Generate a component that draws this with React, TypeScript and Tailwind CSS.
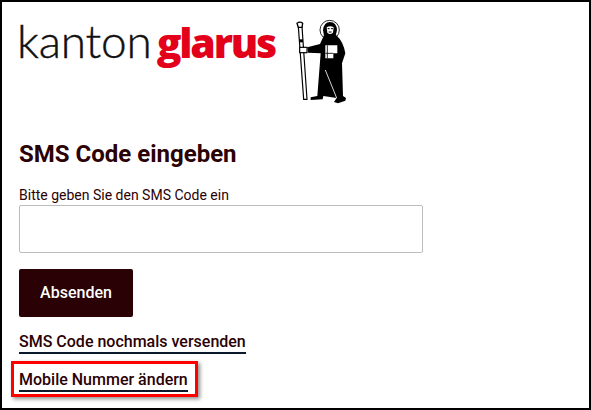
import React from "react";

// viewBox uses the 3x coordinates of the crop at (290,10), 70x100 px
const Saint = () => (
  <svg width="70" height="100" viewBox="0 0 210 300" className="shrink-0">
    {/* halo */}
    <circle cx="125" cy="60" r="29" fill="none" stroke="#000" strokeWidth="2.5" />
    {/* head */}
    <path d="M105 60 Q108 36 126 36 Q145 36 147 60 L143 78 L108 78 Z" fill="#000" />
    <path d="M116 52 Q126 46 137 52 L135 68 Q126 76 118 68 Z" fill="#fff" />
    <path d="M119 56h6M129 56h6M122 66h9" stroke="#000" strokeWidth="3" />
    {/* robe and arm */}
    <path d="M108 76 L145 76 Q166 95 172 130 L162 160 L165 258 L174 264 L172 272 L150 280 L138 276 L146 264 L106 258 L104 268 L68 270 L68 262 L88 258 L98 130 L60 128 L58 112 L96 102 Z" fill="#000" />
    {/* book */}
    <path d="M112 106 L148 106 L148 130 L136 130 L136 145 L112 145 Z" fill="#fff" />
    <path d="M118 106 V145 M112 130 H136" stroke="#000" strokeWidth="2.5" />
    {/* robe fold */}
    <path d="M112 180 L146 264" stroke="#fff" strokeWidth="2.5" />
    {/* staff */}
    <path d="M31 50 L47 268 L57 268 L42 50 Z" fill="#fff" stroke="#000" strokeWidth="3.5" />
    <path d="M27 40 Q36 33 44 40 L42 52 L31 52 Z" fill="#fff" stroke="#000" strokeWidth="4" />
    <rect x="33" y="88" width="12" height="9" fill="#000" />
    <rect x="35" y="112" width="22" height="16" fill="#fff" stroke="#000" strokeWidth="3.5" />
  </svg>
);

export default function App() {
  return (
    <div className="w-[591px] h-[410px] overflow-hidden bg-white border-2 border-black text-[#2a0104] font-['Roboto',sans-serif]">
      <div className="pl-[17px]">
        <div className="relative flex items-start h-[109px] pt-[9px] -ml-[2px]">
          <div className="flex items-baseline h-[60px] leading-[60px]">
            <span className="font-['Lato',sans-serif] font-light text-[46px] text-[#111] tracking-[-0.2px] [-webkit-text-stroke:0.4px_#111]">kanton</span>
            <span className="ml-[5px] font-['Open_Sans',sans-serif] font-extrabold text-[41px] text-[#e2001a] tracking-[-2.2px]">glarus</span>
          </div>
          <div className="absolute left-[271px] top-[8px]">
            <Saint />
          </div>
        </div>
        <h1 className="mt-[29px] text-[24px] leading-[28px] font-bold">SMS Code eingeben</h1>
        <label className="block mt-[19px] text-[14px] leading-[16px]">Bitte geben Sie den SMS Code ein</label>
        <div className="mt-[2px] w-[404px] h-[48px] border border-[#bdbdbd] rounded-[2px] bg-white" />
        <button className="mt-[16px] w-[114px] h-[48px] bg-[#2a0104] rounded-[2px] text-white text-[16px] font-medium">
          Absenden
        </button>
        <div className="mt-[13px]">
          <a className="inline-block text-[16px] leading-[19px] font-medium border-b-2 border-[#0b1a2b] pb-[1px]">
            SMS Code nochmals versenden
          </a>
        </div>
        <div className="mt-[14px]">
          <a className="relative inline-block text-[16px] leading-[19px] font-medium border-b-2 border-[#0b1a2b] pb-[1px]">
            Mobile Nummer ändern
            {/* red annotation box */}
            <span className="absolute -left-[8px] -top-[9px] -right-[10px] -bottom-[7px] border-[3px] border-[#ff0000] shadow-[2px_2px_4px_rgba(0,0,0,0.45)]" />
          </a>
        </div>
      </div>
    </div>
  );
}
